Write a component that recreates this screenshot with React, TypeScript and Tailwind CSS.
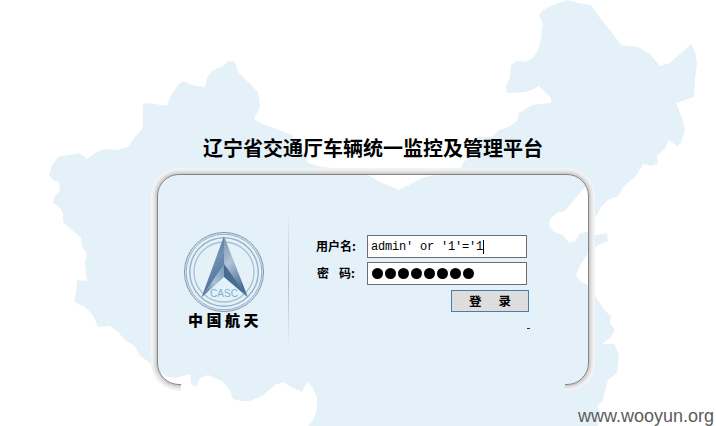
const LAND =
  "M49 175L52 165L56 160L60 156L70 155L78 153L82 155L87 159L95 153L105 149L118 150L128 147L134 138L143 128L143 110L142 105L146 103L155 104L167 106L170 97L178 85L183 81L192 85L205 87L207 78L212 71L218 68L222 67L229 61L235 62L238 72L249 83L258 92L260 107L254 119L263 124L279 130L292 135L297 147L307 160L308 163L322 167L345 169L368 175L380 182L399 190L425 177L450 172L462 167L463 163L470 155L477 147L475 137L484 137L492 137L499 130L508 127L517 121L519 113L532 105L551 103L551 98L539 86L532 90L525 92L507 93L506 87L510 77L511 65L517 61L525 62L533 58L537 52L541 40L543 24L539 15L543 10L555 4L567 0L578 3L591 5L597 14L610 30L621 45L638 47L650 54L660 66L670 63L691 44L695 52L697 62L695 80L694 97L685 100L676 103L682 118L685 130L681 143L677 146L669 140L665 148L657 156L658 163L652 166L643 164L636 176L624 186L618 196L608 200L601 207L597 215L592 218L588 186L585 187L565 211L557 213L550 219L549 225L554 232L563 235L569 243L575 241L580 233L588 232L596 235L607 233L608 241L600 244L596 247L588 253L581 264L576 275L580 281L587 285L594 290L596 297L603 308L611 317L610 323L615 330L611 337L602 344L614 344L617 350L619 356L617 373L608 380L605 391L602 402L597 406L600 412L598 426H308L310 424L314 418L317 408L317 397L312 387L307 382L302 392L291 387L283 382L275 385L262 396L250 401L241 401L233 399L230 390L222 381L208 375L200 378L196 387L191 384L190 374L182 376L177 378L168 377L158 371L152 364L140 356L135 346L125 340L118 332L110 326L98 327L93 315L85 307L74 302L76 293L77 280L87 281L85 263L87 253L82 247L81 238L72 230L63 222L63 213L59 207L53 203L54 198L60 190L59 182L53 180Z";

function MapBackground() {
  return (
    <svg className="absolute inset-0" width="716" height="426" viewBox="0 0 716 426" aria-hidden="true">
      <path d={LAND} fill="#e4f1f9" />
    </svg>
  );
}

function Logo() {
  return (
    <svg width="82" height="82" viewBox="183 231 82 82" aria-label="CASC">
      <defs>
        <linearGradient id="wingL" x1="0" y1="0" x2="0.3" y2="1">
          <stop offset="0" stopColor="#426587" />
          <stop offset="0.5" stopColor="#7392b5" />
          <stop offset="1" stopColor="#466a90" />
        </linearGradient>
        <linearGradient id="wingR" x1="0" y1="0" x2="0.4" y2="1">
          <stop offset="0" stopColor="#7890a8" />
          <stop offset="0.45" stopColor="#b1c4d6" />
          <stop offset="1" stopColor="#456a90" />
        </linearGradient>
        <linearGradient id="footL" x1="1" y1="0" x2="0" y2="1">
          <stop offset="0" stopColor="#7495b8" />
          <stop offset="0.5" stopColor="#a9c2d8" />
          <stop offset="1" stopColor="#375c82" />
        </linearGradient>
      </defs>
      <g fill="none" stroke="#7594b3">
        <circle cx="224" cy="272" r="39.5" strokeWidth="1" />
        <circle cx="224" cy="272" r="37.8" strokeWidth="0.9" stroke="#8aa5c0" />
        <circle cx="224" cy="272" r="34.2" strokeWidth="1.5" stroke="#9bb4ca" />
        <circle cx="224" cy="272" r="30" strokeWidth="1.3" stroke="#a9bfd2" />
      </g>
      <path d="M224 236L201.500 297.500L224 277L248 297.500Z" fill="#e4f1f9" />
      <path d="M224 236L201.500 297.500L224 265Z" fill="url(#wingL)" />
      <path d="M224 236L248 297.500L224 265Z" fill="url(#wingR)" />
      <path d="M224 264L201.500 297.500L224 277Z" fill="url(#footL)" />
      <path d="M224 264L248 297.500L224 277Z" fill="#476c93" />
      <text x="224" y="296.500" textAnchor="middle" fontSize="10" textLength="28" fill="#79afd0" className="font-['Liberation_Sans',sans-serif]">
        CASC
      </text>
    </svg>
  );
}

function Frame() {
  return (
    <div className="absolute -inset-2 [clip-path:polygon(0_0,100%_0,100%_100%,416px_100%,416px_50%,32px_50%,32px_100%,0_100%)]">
      <div className="absolute inset-2 rounded-[22px] border border-[#858585] shadow-[0_0_0_1px_#cccccc,0_0_0_2px_#d8d8d8,0_0_0_3px_#e3e3e3,0_0_0_4px_#ebebeb,0_0_0_5px_#f1f1f1,0_0_0_6px_#f2f5f7]" />
    </div>
  );
}

export default function App() {
  return (
    <main className="relative h-[426px] w-[716px] overflow-hidden bg-white font-['Noto_Sans_CJK_SC',sans-serif] text-black">
      <MapBackground />
      <div className="relative flex h-full flex-col">
        <h1 className="ml-[203px] mt-[133px] h-[30px] whitespace-nowrap text-[20px] font-bold leading-[30px]">
          辽宁省交通厅车辆统一监控及管理平台
        </h1>
        <section className="relative ml-[157px] mt-[11px] flex h-[212px] w-[432px]">
          <Frame />
          <div className="ml-[26px] mt-[57px] flex w-[82px] flex-col">
            <Logo />
            <div className="ml-[5px] -mt-[3px] whitespace-nowrap text-[15px] font-black leading-[20px] tracking-[3.500px]">中国航天</div>
          </div>
          <div className="ml-[23px] mt-[38px] h-[138px] w-px bg-linear-to-b from-transparent via-[#b3bfca] to-transparent" />
          <form className="ml-[27px] mt-[61px] flex w-[213px] flex-col">
            <div className="flex h-[23px]">
              <label className="w-[51px] whitespace-nowrap text-[12px] font-bold leading-[22px]">用户名:</label>
              <div className="flex h-[23px] w-[160px] items-center border border-[#6b6d75] bg-white pl-[3px] font-['Liberation_Mono',monospace] text-[12px] tracking-[-0.200px]">
                <span className="mt-px whitespace-pre">admin' or '1'='1</span>
                <span className="h-[14px] w-px bg-black" />
              </div>
            </div>
            <div className="mt-1 flex h-[23px]">
              <label className="flex w-[51px] whitespace-nowrap text-[12px] font-bold leading-[22px]">
                <span className="w-[23px] pl-px">密</span>
                <span>码:</span>
              </label>
              <div className="flex h-[23px] w-[160px] items-center gap-[2px] border border-[#6b6d75] bg-white pl-[4px]">
                {[0, 1, 2, 3, 4, 5, 6, 7].map((n) => (
                  <span key={n} className="size-[11px] rounded-full bg-black" />
                ))}
              </div>
            </div>
            <button type="button" className="mt-[5px] flex h-[22px] w-[78px] items-center gap-[17px] self-end border border-[#4a7ca6] bg-[#dddddd] pl-[17px] text-[12.500px] font-bold leading-none">
              <span>登</span>
              <span>录</span>
            </button>
            <span className="mr-[-1px] mt-[16px] h-px w-[3px] self-end bg-[#30303a]" />
          </form>
        </section>
        <div className="ml-[578px] mt-[21px] whitespace-nowrap font-['Liberation_Sans',sans-serif] text-[18px] leading-[20px] text-[#5c5c5c]">www.wooyun.org</div>
      </div>
    </main>
  );
}
